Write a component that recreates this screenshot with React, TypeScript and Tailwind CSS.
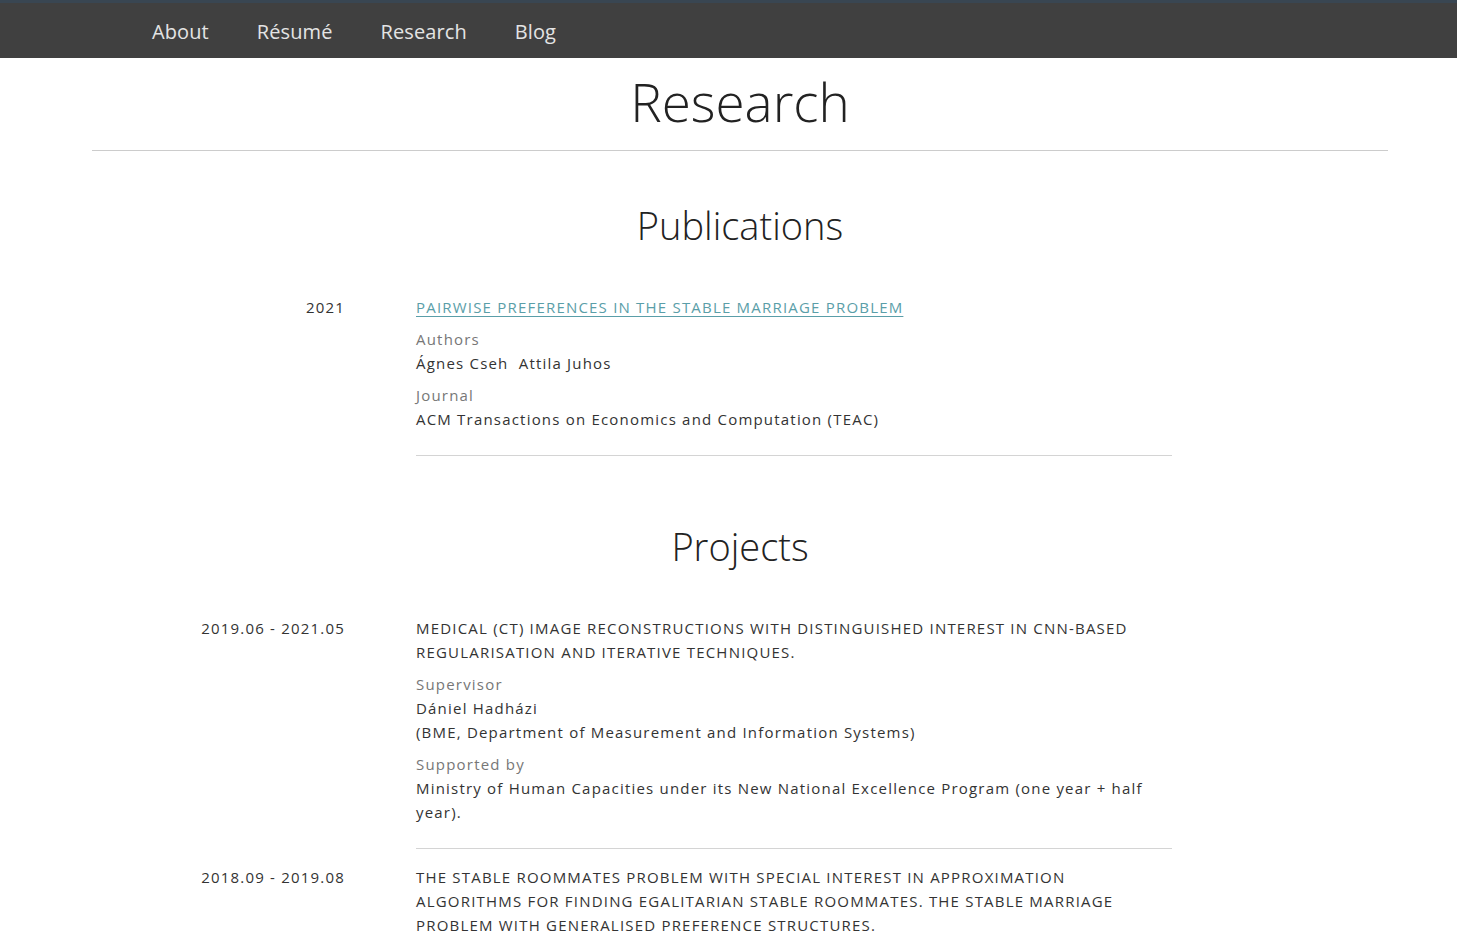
import React from 'react';

const navItems = ['About', 'Résumé', 'Research', 'Blog'];

const Label = ({ children }: { children: React.ReactNode }) => (
  <div className="text-[#777777] mt-2">{children}</div>
);

const Row = ({ date, children, last }: { date: string; children: React.ReactNode; last?: boolean }) => (
  <div className="grid grid-cols-[253px_756px] gap-x-[71px]">
    <div className="text-right text-[#333333]">{date}</div>
    <div className={last ? 'pb-2' : 'pb-6 border-b border-[#d4d4d4] mb-[16px]'}>{children}</div>
  </div>
);

export default function App() {
  return (
    <div
      className="min-h-screen bg-white text-[#333333]"
      style={{ fontFamily: '"Open Sans", "Noto Sans", sans-serif' }}
    >
      <nav className="h-[58px] bg-[#404040] border-t-[3px] border-[#394652] flex items-center pl-[128px]">
        {navItems.map(item => (
          <a key={item} href="#" className="px-6 text-[20px] tracking-[0.005em] text-[#e4e4e4] pt-[3px]">
            {item}
          </a>
        ))}
      </nav>

      <main className="ml-[92px] w-[1296px]">
        <h1 className="text-center text-[53px] font-light leading-[88px] pb-1 border-b border-[#cccccc] text-[#222222]">
          Research
        </h1>

        <section className="text-[15px] leading-6 tracking-[0.08em]">
          <h2 className="text-center text-[38px] font-light leading-[60px] text-[#222222] tracking-normal mt-[44px] mb-[40px]">
            Publications
          </h2>
          <Row date="2021" last>
            <a href="#" className="uppercase text-[#5a9ea8] underline underline-offset-[3px]">
              Pairwise preferences in the stable marriage problem
            </a>
            <Label>Authors</Label>
            <div>Ágnes Cseh&nbsp; Attila Juhos</div>
            <Label>Journal</Label>
            <div>ACM Transactions on Economics and Computation (TEAC)</div>
            <div className="border-b border-[#d4d4d4] mt-6" />
          </Row>

          <h2 className="text-center text-[38px] font-light leading-[60px] text-[#222222] tracking-normal mt-[52px] mb-[40px]">
            Projects
          </h2>
          <Row date="2019.06 - 2021.05">
            <div className="uppercase">
              Medical (CT) image reconstructions with distinguished interest in CNN-based regularisation and iterative techniques.
            </div>
            <Label>Supervisor</Label>
            <div>Dániel Hadházi</div>
            <div>(BME, Department of Measurement and Information Systems)</div>
            <Label>Supported by</Label>
            <div>Ministry of Human Capacities under its New National Excellence Program (one year + half year).</div>
          </Row>
          <Row date="2018.09 - 2019.08" last>
            <div className="uppercase">
              The stable roommates problem with special interest in approximation algorithms for finding egalitarian stable roommates. The stable marriage problem with generalised preference structures.
            </div>
          </Row>
        </section>
      </main>
    </div>
  );
}
